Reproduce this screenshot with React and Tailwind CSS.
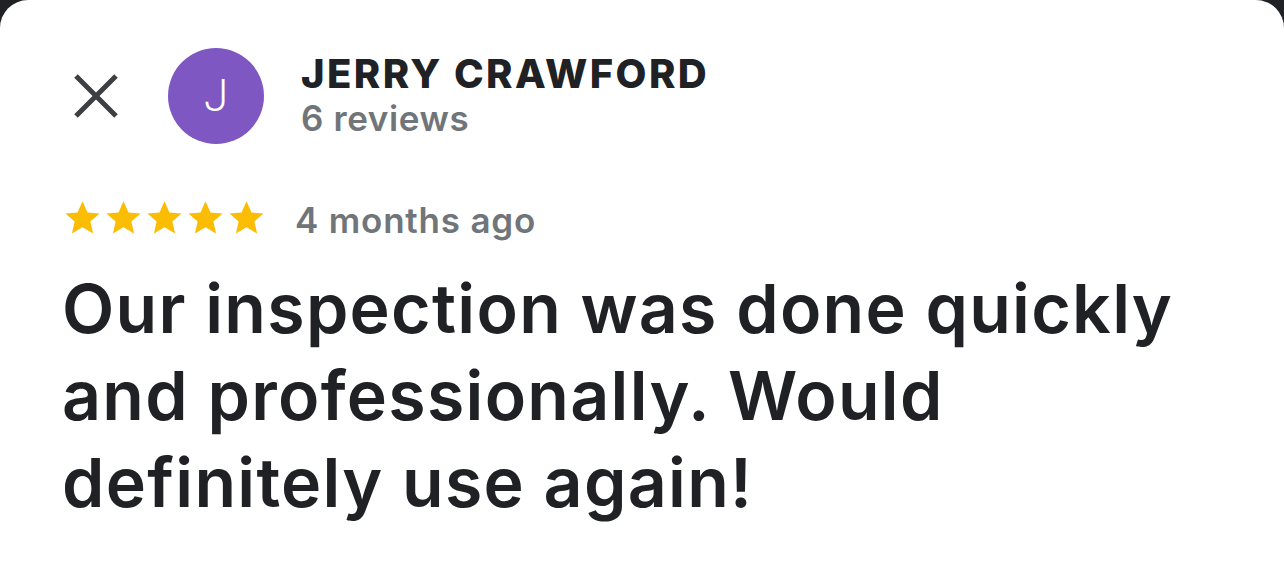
const STAR = 'M12 2.5l2.9 6.6 7.1.6-5.4 4.7 1.6 7-6.2-3.7-6.2 3.7 1.6-7L2 9.7l7.1-.6z';

function Star() {
  return (
    <svg viewBox="0 0 24 24" className="w-[41px] h-[41px]">
      <path d={STAR} fill="#fbbc04" />
    </svg>
  );
}

export default function App() {
  return (
    <div className="w-[1284px] h-[586px] bg-[#202124] overflow-hidden" style={{ fontFamily: 'Inter, "Liberation Sans", sans-serif' }}>
      <div className="h-full bg-white rounded-t-[28px] pt-[48px]">
        {/* header */}
        <div className="flex items-center">
          <div className="w-[168px] flex justify-start pl-[72px]">
            <svg viewBox="0 0 48 48" className="w-[48px] h-[48px]">
              <path d="M4 4L44 44M44 4L4 44" stroke="#3c4043" strokeWidth="5" />
            </svg>
          </div>
          <div className="w-[96px] h-[96px] rounded-full bg-[#7e57c2] flex items-center justify-center text-white text-[44px] font-light" style={{ fontFamily: 'Roboto, sans-serif' }}>
            J
          </div>
          <div className="ml-[37px] flex flex-col -mt-[2px]">
            <p className="text-[40px] leading-[46px] font-extrabold tracking-[2.4px] text-[#202124]">JERRY CRAWFORD</p>
            <p className="text-[35px] leading-[42px] font-semibold tracking-[0.6px] text-[#70757a]">6 reviews</p>
          </div>
        </div>

        {/* rating */}
        <div className="flex items-center pl-[62px] mt-[50px]">
          <div className="flex -mt-[6px]">
            <Star /><Star /><Star /><Star /><Star />
          </div>
          <span className="ml-[28px] text-[35px] font-semibold tracking-[0.8px] text-[#70757a]">4 months ago</span>
        </div>

        {/* review body */}
        <p className="px-[62px] mt-[18px] text-[68px] leading-[87px] font-semibold text-[#202124] tracking-[1.3px] whitespace-nowrap">
          Our inspection was done quickly<br />
          and professionally. Would<br />
          definitely use again!
        </p>
      </div>
    </div>
  );
}
